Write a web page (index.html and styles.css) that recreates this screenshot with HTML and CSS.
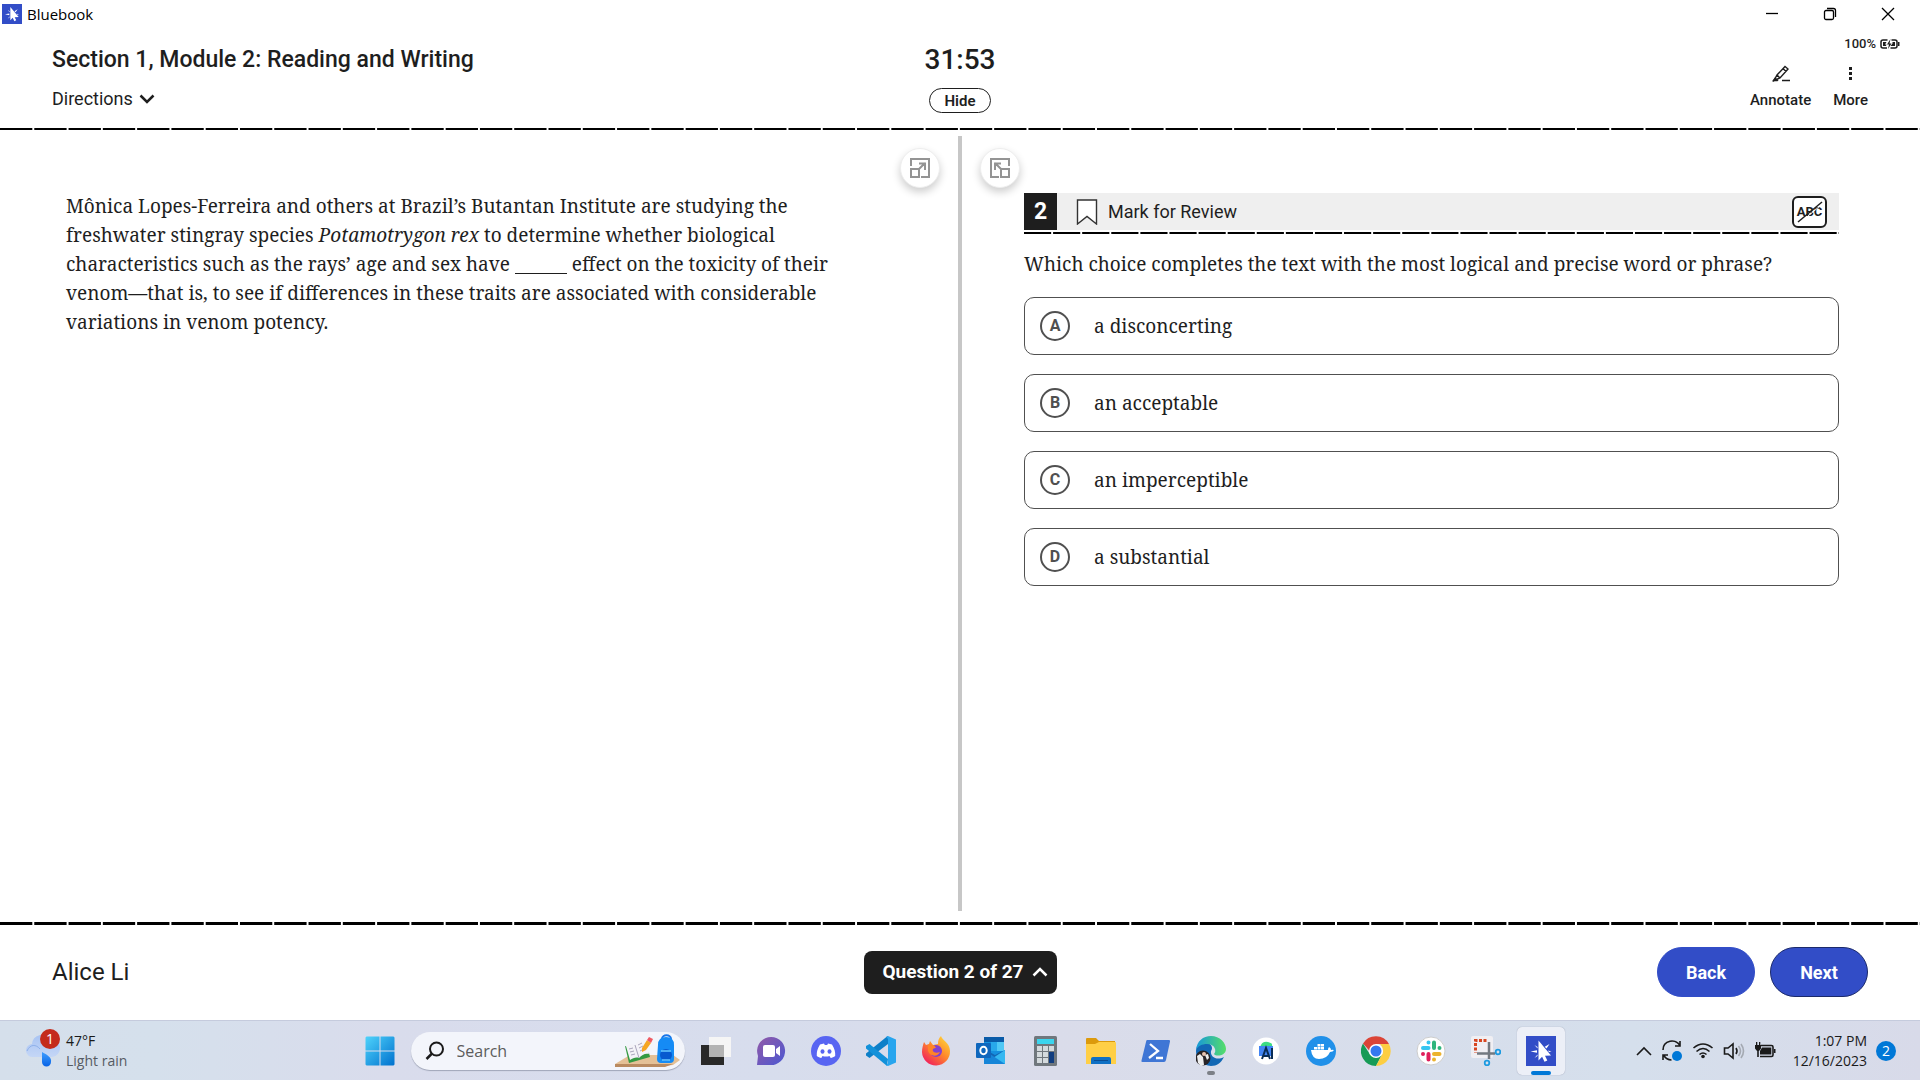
FILE: index.html
```html
<!DOCTYPE html>
<html lang="en">
<head>
<meta charset="utf-8">
<meta name="viewport" content="width=device-width, initial-scale=1">
<title>Bluebook</title>
<link rel="stylesheet" href="styles.css">
</head>
<body>
<svg width="0" height="0" class="symbols" aria-hidden="true">
  <symbol id="bluebook" viewBox="0 0 30 30"><path fill="#324dc7" d="M0 0h30v30H0z"/><path fill="#fff" d="M12.500 4.500L25 19.500l-6 .3 2.300 4.700-2.800 1.200-2.400-5-3.600 3.800z"/><path fill="#fff" d="M4.500 15.500l6.500-1.200v2.400zM8.500 9l3 2v1.500zM8.500 22l3-3.500V20zM23.500 8l-3 4.500-1.800-1.800zM25.500 15.500l-3.500-1 1 1.500z"/></symbol>
</svg>
<div class="window">
  <div class="titlebar">
    <svg class="app-icon"><use href="#bluebook"/></svg>
    <span class="app-name">Bluebook</span>
    <div class="window-controls">
      <button aria-label="Minimize"><svg width="12" height="12" viewBox="0 0 12 12"><path d="M0 5.500h12"/></svg></button>
      <button aria-label="Restore"><svg width="14" height="14" viewBox="0 0 14 14"><rect x="1.500" y="3.500" width="9" height="9" rx="1.500"/><path d="M4 1.500h6.500a2 2 0 0 1 2 2V10"/></svg></button>
      <button aria-label="Close"><svg width="14" height="14" viewBox="0 0 14 14"><path d="M1 1l12 12M13 1L1 13"/></svg></button>
    </div>
  </div>

  <header class="exam-header">
    <div class="section-info">
      <h1>Section 1, Module 2: Reading and Writing</h1>
      <button class="directions">Directions
        <svg width="16" height="10" viewBox="0 0 16 10"><path d="M1.500 1.500L8 8l6.500-6.500"/></svg>
      </button>
    </div>
    <div class="timer">
      <time>31:53</time>
      <button class="hide">Hide</button>
    </div>
    <div class="tools">
      <div class="battery">100%
        <svg width="20" height="10" viewBox="0 0 20 10"><path fill="none" stroke="#1e1e1e" stroke-width="1.500" d="M7.500 1H3Q1 1 1 3v4q0 2 2 2h4M11.500 1H15q2 0 2 2v4q0 2-2 2h-4.500"/><path fill="#1e1e1e" d="M18 3h1.500v4H18zM3 3h3.500L5 5.500h1.500L6 7H3zM12.500 3H15v4h-4.500l2-2.500z"/><path fill="#1e1e1e" d="M10.500 0L7 5.500h2L8 10l3.500-5.500h-2z"/></svg>
      </div>
      <div class="tool-row">
        <button>
          <svg width="20" height="18" viewBox="0 0 20 18"><path d="M3 15.500L6 10l8-8.500 3 2.500-8 9-6 2.500zM6 10l3 3M12 3.500L15 6.500M11 15.500h8" fill="none" stroke="#1e1e1e" stroke-width="1.400"/><path fill="#1e1e1e" d="M1 16.200l3-4 3.500 3-1 1z"/></svg>
          Annotate
        </button>
        <button>
          <svg width="20" height="18" viewBox="0 0 20 18"><path fill="#1e1e1e" d="M8 2h3v3H8zM8 7h3v3H8zM8 12h3v3H8z"/></svg>
          More
        </button>
      </div>
    </div>
  </header>
  <div class="dashes"></div>

  <main class="panes">
    <section class="passage-pane">
      <button class="expand expand-left" aria-label="Expand passage"><svg width="20" height="20" viewBox="0 0 20 20"><path d="M1 8V1h18v18h-8M1 11h8v8H1zM9 11l6-6M9 5.500h6V12"/></svg></button>
      <p>Mônica Lopes-Ferreira and others at Brazil’s Butantan Institute are studying the freshwater stingray species <em>Potamotrygon rex</em> to determine whether biological characteristics such as the rays’ age and sex have <span class="blank"></span> effect on the toxicity of their venom—that is, to see if differences in these traits are associated with considerable variations in venom potency.</p>
    </section>
    <div class="divider"></div>
    <section class="question-pane">
      <button class="expand expand-right" aria-label="Expand question"><svg width="20" height="20" viewBox="0 0 20 20"><path d="M19 8V1H1v18h8M11 11h8v8h-8zM11 11L5 5M11 5.500H5V12"/></svg></button>
      <div class="question-head">
        <span class="number">2</span>
        <button class="mark">
          <svg width="22" height="27" viewBox="0 0 22 27"><path d="M1.500 2h19v24L11 18.500 1.500 26z" fill="#fff" stroke="#333" stroke-width="1.400"/></svg>
          Mark for Review
        </button>
        <button class="eliminate" aria-label="Cross out choices">
          <span>ABC</span>
          <svg width="26" height="22" viewBox="0 0 26 22"><path d="M1 21L25 1" stroke="#1e1e1e" stroke-width="1.500"/><path d="M2 22.500L26 2.500" stroke="#fff"/></svg>
        </button>
      </div>
      <div class="dashes dashes-question"></div>
      <p class="prompt" id="prompt">Which choice completes the text with the most logical and precise word or phrase?</p>
      <div class="choices" role="radiogroup" aria-labelledby="prompt">
        <label class="choice"><span class="mark-circle"><input type="radio" name="answer"><b>A</b></span>a disconcerting</label>
        <label class="choice"><span class="mark-circle"><input type="radio" name="answer"><b>B</b></span>an acceptable</label>
        <label class="choice"><span class="mark-circle"><input type="radio" name="answer"><b>C</b></span>an imperceptible</label>
        <label class="choice"><span class="mark-circle"><input type="radio" name="answer"><b>D</b></span>a substantial</label>
      </div>
    </section>
  </main>

  <div class="dashes dashes-footer"></div>
  <footer class="exam-footer">
    <span class="student">Alice Li</span>
    <button class="navigator">Question 2 of 27
      <svg width="16" height="10" viewBox="0 0 16 10"><path d="M1.500 8.500L8 2l6.500 6.500"/></svg>
    </button>
    <div class="nav-buttons">
      <button class="back">Back</button>
      <button class="next">Next</button>
    </div>
  </footer>
</div>

<nav class="taskbar" aria-label="Taskbar">
  <button class="weather">
    <svg width="36" height="38" viewBox="0 0 36 38"><defs><linearGradient id="cloud" x2="0" y2="1"><stop stop-color="#a9c4f3"/><stop offset="1" stop-color="#c4d6f6"/></linearGradient><linearGradient id="drop" x2="0" y2="1"><stop stop-color="#3f9dff"/><stop offset="1" stop-color="#0763e6"/></linearGradient></defs><path fill="url(#cloud)" d="M7 28a6.500 6.500 0 0 1-1-13 10 10 0 0 1 18-5 9 9 0 0 1 2 18z"/><path d="M1 22c3-7 9-7 13-2" fill="none" stroke="#8db0ea"/><path fill="url(#drop)" d="M16 23c6 3 10 6 9 10a4.500 4.500 0 0 1-9 0z"/><circle cx="24" cy="10" r="10" fill="#c42b1c"/><text x="24" y="15" text-anchor="middle" class="badge-text">1</text></svg>
    <span class="weather-text"><span>47°F</span><span class="muted">Light rain</span></span>
  </button>

  <div class="apps">
    <button class="app" aria-label="Start"><svg width="30" height="30" viewBox="0 0 30 30"><defs><linearGradient id="win" x2="1" y2="1"><stop stop-color="#4fd3fb"/><stop offset="1" stop-color="#0071ce"/></linearGradient></defs><path fill="url(#win)" d="M1.500.5H14.500V14.500H.5V1.500zM15.500.5h13l1 1v13h-14zM.5 15.500h14v14h-13l-1-1zM15.500 15.500h14v13l-1 1h-13z"/></svg></button>
    <label class="search">
      <svg width="20" height="20" viewBox="0 0 20 20"><circle cx="11.500" cy="8" r="6.500"/><path d="M7 12.500L1.500 18" stroke-width="2.500"/></svg>
      <input type="text" placeholder="Search" aria-label="Search">
      <svg class="search-art" width="66" height="36" viewBox="0 0 66 36"><path fill="#e4c096" d="M0 31L15 22h43l7 5-7 5-8 1H0z"/><path fill="#b98a60" d="M0 31h58l-8 3H0z"/><path fill="#349a42" d="M10 13l4 17 21-6-1-4z"/><path fill="#f4f3f8" d="M11 13c4-2 6-2 9-1 2-4 5-5 9-5l5 14c-4-1-7 1-10 4-3-1-6 0-9 2z"/><path d="M20 12l4 13M14 16l4-1M15 19l4-1M16 22l4-1M23 12l4-2M24 15l4-2M25 18l4-2" stroke="#aaa6bc" fill="none"/><path fill="#f6a623" d="M27 15l5-8 4 3-5 7-4 2z"/><path fill="#ef5a62" d="M32 7l2-3 4 2-2 4z"/><path d="M47 6c0-5 9-5 9 0" fill="none" stroke="#1976e8" stroke-width="2"/><path fill="#158bf5" d="M43 12q0-8 8-8t8 8v14q0 4-4 4h-9q-4 0-4-4z"/><rect x="45" y="16" width="12" height="12" rx="6" fill="#0759cf"/><path d="M46 18h10M47 27h8" stroke="#67c7ff" stroke-width="1.500"/></svg>
    </label>
    <button class="app" aria-label="Task view"><svg width="30" height="30" viewBox="0 0 30 30"><path fill="#292929" d="M0 9h23v20H0z"/><path fill="#f5f5f5" d="M8 1h22v20H8z"/><path fill="#b3b3b3" d="M8 9h15v12H8z"/></svg></button>
    <button class="app" aria-label="Chat"><svg width="30" height="30" viewBox="0 0 30 30"><defs><linearGradient id="chat" x2="1" y2="1"><stop stop-color="#9259a7"/><stop offset="1" stop-color="#4b58d2"/></linearGradient></defs><path fill="url(#chat)" d="M1 29l1-9A14 14 0 1 1 14 29z"/><rect x="7" y="9" width="12" height="12" rx="2" fill="#fff"/><path fill="#fff" d="M20 13l4-3v10l-4-3z"/></svg></button>
    <button class="app" aria-label="Discord"><svg width="30" height="30" viewBox="0 0 30 30"><circle cx="15" cy="15" r="15" fill="#5865f2"/><path fill="#fff" d="M9 8.500L13 7.500l.8 1.500h2.400l.8-1.500 4 1c2.500 4 3.500 7.500 3.200 11.500-1.500 1.200-3 1.700-4.500 2L18.500 20q-3.500 1-7 0l-1.200 2c-1.500-.3-3-.8-4.500-2C5.500 16 6.500 12.500 9 8.500z"/><ellipse cx="11.500" cy="15.500" rx="2" ry="2.200" fill="#5865f2"/><ellipse cx="18.500" cy="15.500" rx="2" ry="2.200" fill="#5865f2"/></svg></button>
    <button class="app" aria-label="Visual Studio Code"><svg width="30" height="30" viewBox="0 0 30 30"><path fill="#0d7fc8" d="M22 0v8L3.500 22 0 19.500v-2L21 .5z"/><path fill="#1291da" d="M3.500 8L0 10v2.500L21 30l1-7z"/><path fill="#28a5ee" d="M22 0l8 3.500v23L22 30q-1 0-1.500-1l1.500-2V3L20.500 1z"/></svg></button>
    <button class="app" aria-label="Firefox"><svg width="30" height="30" viewBox="0 0 30 30"><defs><linearGradient id="fox" x1="1" x2=".2" y2="1"><stop stop-color="#ffe43d"/><stop offset=".5" stop-color="#ff8a2a"/><stop offset="1" stop-color="#f0195f"/></linearGradient></defs><path fill="url(#fox)" d="M3 6l2 3 3-1 1-3 3 4 5-1c0-4 1-6 3-8 1 4 9 7 9 15a14 14 0 0 1-28 1C1 12 2 9 3 6z"/><circle cx="15" cy="15" r="6" fill="#8341cf"/><path fill="#ff8427" d="M7 9c4-1 7 0 8 3-2 0-4 1-3 3s4 2 7 1c-2 5-10 5-12-1z"/></svg></button>
    <button class="app" aria-label="Outlook"><svg width="30" height="30" viewBox="0 0 30 30"><path fill="#0a5ba8" d="M8 1h20v8H8z"/><path fill="#1490df" d="M8 6h20v22H8z"/><path fill="#50c8f5" d="M21 6h7v9h-7z"/><path fill="#28a8ea" d="M15 6h6v9h-6z"/><path fill="#1266b4" d="M8 13l11 6 10-5v7H8z"/><path fill="#35b8f1" d="M29 14v14H8z"/><path fill="#1685d8" d="M8 14l21 14H8z"/><rect y="7" width="15" height="15" rx="1" fill="#0f67bd"/><ellipse cx="7.500" cy="14.500" rx="3.200" ry="3.700" fill="none" stroke="#fff" stroke-width="2"/></svg></button>
    <button class="app" aria-label="Calculator"><svg width="30" height="30" viewBox="0 0 30 30"><rect x="3" width="23" height="30" rx="1.500" fill="#70777d"/><path fill="#3bd5ee" d="M6 3h17v5H6z"/><path fill="#d4dadd" d="M6 10h5v5H6zM12 10h5v5h-5zM18 10h5v5h-5zM6 16h5v5H6zM12 16h5v5h-5zM6 22h5v5H6zM12 22h5v5h-5z"/><path fill="#123e80" d="M18 16h5v11h-5z"/></svg></button>
    <button class="app" aria-label="File Explorer"><svg width="30" height="30" viewBox="0 0 30 30"><path fill="#dc9a0c" d="M0 3q0-1 1-1h9l3 3h16v9H0z"/><path fill="#ffcf46" d="M0 8h9l4-2h16q1 0 1 1v21H0z"/><path fill="#0f70c4" d="M5 28v-5q0-2 2-2h16q2 0 2 2v5z"/><path d="M8 24.500h14" stroke="#0a4c92"/></svg></button>
    <button class="app" aria-label="PowerShell"><svg width="30" height="30" viewBox="0 0 30 30"><path fill="#3f76d5" d="M6 4h22q1.500 0 1 1.500L25 24q-.5 2-2 2H1.500Q0 26 .5 24.500L5 6q.3-2 1-2z"/><path d="M9 8l8 7-9 7M15 22h7" fill="none" stroke="#fff" stroke-width="2.300"/></svg></button>
    <button class="app running" aria-label="Edge"><svg width="30" height="30" viewBox="0 0 30 30"><defs><linearGradient id="edge"><stop stop-color="#1698db"/><stop offset="1" stop-color="#55de68"/></linearGradient></defs><path fill="#1268b5" d="M0 15c0-7 7-10 12-8 4 2 5 5 3 8-1 6 6 10 13 6-3 6-7 9-13 9A15 15 0 0 1 0 15z"/><path fill="url(#edge)" d="M0 14C1 5 7 0 15 0c9 0 15 7 15 13 0 7-10 8-12 5 3-3 1-10-7-10-5 0-9 2-11 6z"/><circle cx="7" cy="22" r="7.500" fill="#282426"/><path fill="#eee" d="M1 20l3-2 3 3 1 8-3 1-3-3zM9 19l3-1 1 4-2 2z"/><circle cx="8" cy="18" r="2" fill="#e8c4b0"/></svg></button>
    <button class="app" aria-label="Android Studio"><svg width="30" height="30" viewBox="0 0 30 30"><circle cx="15" cy="15" r="13.500" fill="#fff"/><path fill="#3ddc84" d="M10 9q2-4 7-3t4 4v1H9z"/><path fill="#4285f4" d="M8 10h14v10H8z"/><path d="M11 23l4-11 4 11M12 20h6M21 12v11" fill="none" stroke="#092c55" stroke-width="2"/></svg></button>
    <button class="app" aria-label="Docker"><svg width="30" height="30" viewBox="0 0 30 30"><circle cx="15" cy="15" r="15" fill="#2090e9"/><path fill="#fff" d="M5 14h17q0-2 1-3 2 1 2 3 1-.5 3 0-1 2-4 2-3 7-11 7-7 0-8-9zM8 11h3v2.500H8zM11.500 11h3v2.500h-3zM15 11h3v2.500h-3zM11.500 8h3v2.500h-3zM15 8h3v2.500h-3z"/></svg></button>
    <button class="app" aria-label="Chrome"><svg width="30" height="30" viewBox="0 0 30 30"><path fill="#db4437" d="M2 7.500A15 15 0 0 1 28 8H15v14z"/><path fill="#169b56" d="M2 7.500A15 15 0 0 0 15 30l6-11.500H9z"/><path fill="#fdce42" d="M28 8a15 15 0 0 1-13 22l6-11.500Q24 13 19 8z"/><circle cx="15" cy="15" r="7" fill="#fff"/><circle cx="15" cy="15" r="5.500" fill="#3478ef"/></svg></button>
    <button class="app" aria-label="Slack"><svg width="30" height="30" viewBox="0 0 30 30"><circle cx="15" cy="15" r="14" fill="#fff" stroke="#ccc"/><g fill="none" stroke-width="4" stroke-linecap="round"><path stroke="#36c5f0" d="M7 12h5.500M12.500 6.500h0"/><path stroke="#2eb67d" d="M18 6.500V12M23.500 12h0"/><path stroke="#ecb22e" d="M18 18h5.500M18 23.500h0"/><path stroke="#e01e5a" d="M12.500 18v5.500M7 18h0"/></g></svg></button>
    <button class="app" aria-label="Snipping Tool"><svg width="30" height="30" viewBox="0 0 30 30"><rect width="22" height="22" rx="2" fill="#f0eff3"/><path d="M15.500 4.500h-11v12" fill="none" stroke="#d84621" stroke-width="3" stroke-dasharray="3 1.500"/><path d="M18 6v17M6 17.500h18" stroke="#737980" stroke-width="2.500"/><circle cx="16" cy="27" r="2.300" fill="none" stroke="#1c9ae0" stroke-width="1.800"/><circle cx="27" cy="16" r="2.300" fill="none" stroke="#1c9ae0" stroke-width="1.800"/></svg></button>
    <button class="app active" aria-label="Bluebook"><svg width="30" height="30"><use href="#bluebook"/></svg></button>
  </div>

  <div class="tray">
    <button aria-label="Show hidden icons"><svg width="16" height="24" viewBox="0 0 16 24"><path d="M1 16l7-7 7 7"/></svg></button>
    <button aria-label="Updates"><svg width="22" height="24" viewBox="0 0 22 24"><path d="M2 11C2 1 15-1 19 7M19 2v5h-5M2 21v-5h5M2.500 16q3 5 8 5"/><circle cx="16" cy="17" r="5" fill="#0078d7" stroke="none"/></svg></button>
    <button aria-label="Wi-Fi"><svg width="22" height="24" viewBox="0 0 22 24"><path d="M1.500 9q9.500-8 19 0M4.500 12.500q6.500-6 13 0M7.500 15.500q3.500-3 7 0"/><circle cx="11" cy="17.500" r="1.800" fill="#1a1a1a" stroke="none"/></svg></button>
    <button aria-label="Volume"><svg width="22" height="24" viewBox="0 0 22 24"><path d="M1.500 9H5l5-4v14l-5-4H1.500zM13 9q2 3 0 6"/><path stroke="#a4a9b2" d="M15.500 7q4 5 0 10M18 5q5 7 0 14"/></svg></button>
    <button aria-label="Battery"><svg width="22" height="24" viewBox="0 0 22 24"><path d="M7 6.500h10.500q1.500 0 1.500 1.500v8q0 1.500-1.500 1.500H6M4 12v6"/><path fill="#1a1a1a" stroke="none" d="M8 8.500h9.300v7H6V12zM20 10h1.500v4H20zM1 6h1V3h1.300v3h1.700V3h1.300v3h.7v3.500L5 12H3L1 9.500z"/></svg></button>
    <div class="clock"><span>1:07 PM</span><span>12/16/2023</span></div>
    <button class="notifications" aria-label="Notifications">2</button>
  </div>
</nav>
</body>
</html>
```
FILE: styles.css
```css
* { box-sizing: border-box; }
body {
  margin: 0;
  min-height: 100vh;
  display: flex;
  flex-direction: column;
  background: #fff;
  color: #1e1e1e;
  font-family: Roboto, sans-serif;
}
button {
  margin: 0;
  padding: 0;
  border: 0;
  background: none;
  color: inherit;
  font: inherit;
}
svg { display: block; flex: none; }
.symbols { position: absolute; }
.window { flex: 1; display: flex; flex-direction: column; }

/* Title bar */
.titlebar {
  display: flex;
  align-items: center;
  gap: 5px;
  height: 28px;
  padding: 0 3px 0 2px;
  color: #000;
  font: 15px/20px "Open Sans", sans-serif;
}
.app-icon { width: 20px; height: 20px; }
.window-controls { display: flex; margin-left: auto; }
.window-controls button { width: 58px; height: 28px; display: grid; place-items: center; }
.window-controls svg { fill: none; stroke: #000; stroke-width: 1.3; }

/* Exam header */
.exam-header {
  display: grid;
  grid-template-columns: 1fr auto 1fr;
  height: 100px;
  padding: 0 52px;
}
h1 { margin: 17px 0 0; font-size: 23px; line-height: 30px; font-weight: 500; }
.directions {
  display: flex;
  align-items: center;
  gap: 6px;
  margin-top: 12px;
  font-size: 18px;
  line-height: 24px;
  font-weight: 400;
}
.directions svg, .navigator svg { fill: none; stroke: currentColor; stroke-width: 2.5; }
.timer { display: flex; flex-direction: column; align-items: center; }
.timer time { margin-top: 15px; font-size: 28px; line-height: 34px; font-weight: 500; }
.hide {
  width: 62px;
  height: 25px;
  margin-top: 11px;
  border: 1px solid #1e1e1e;
  border-radius: 13px;
  font-size: 15px;
  line-height: 20px;
  font-weight: 600;
}
.tools { display: flex; flex-direction: column; align-items: flex-end; }
.battery {
  display: flex;
  align-items: center;
  gap: 4px;
  margin: 8px -32px 0 0;
  font-size: 13px;
  line-height: 16px;
  font-weight: 500;
}
.tool-row { display: flex; gap: 22px; margin-top: 13px; }
.tool-row button {
  display: flex;
  flex-direction: column;
  align-items: center;
  gap: 7px;
  font-size: 15px;
  line-height: 20px;
  font-weight: 500;
}
.dashes {
  height: 2px;
  background: linear-gradient(90deg, #000 0 94%, transparent 94%) 0 0 / 34px 100% round;
}
.dashes-footer { height: 3px; }
.dashes-question { margin-top: 2px; background-size: 29px 100%; }

/* Panes */
.panes {
  flex: 1;
  display: grid;
  grid-template-columns: 1fr 4px 1fr;
  padding: 6px 0 11px;
}
.divider { background: #c7c7c7; }
.passage-pane, .question-pane { position: relative; }
.passage-pane { padding: 56px 120px 0 66px; }
.question-pane { padding: 57px 81px 0 62px; }
.passage-pane p, .prompt, .choice {
  font-family: "Noto Serif", "DejaVu Serif Condensed", "DejaVu Serif", serif;
  font-size: 19px;
  line-height: 29px;
}
.passage-pane p { margin: 0; }
.blank { display: inline-block; width: 52px; border-bottom: 1px solid #1e1e1e; vertical-align: -3px; }
.expand {
  position: absolute;
  top: 12px;
  width: 40px;
  height: 40px;
  display: grid;
  place-items: center;
  border: 1px solid #eee;
  border-radius: 50%;
  background: #fff;
  box-shadow: 0 4px 8px #0003;
}
.expand svg { fill: none; stroke: #949494; stroke-width: 2; }
.expand-left { right: 18px; }
.expand-right { left: 18px; }
.question-head {
  display: flex;
  align-items: center;
  height: 37px;
  padding-right: 12px;
  background: #efefef;
}
.number {
  width: 33px;
  background: #1e1e1e;
  color: #fff;
  font-size: 23px;
  line-height: 37px;
  font-weight: 700;
  text-align: center;
}
.mark {
  display: flex;
  align-items: center;
  gap: 10px;
  margin-left: 19px;
  font-size: 18px;
  line-height: 24px;
}
.eliminate {
  display: grid;
  place-items: center;
  width: 35px;
  height: 32px;
  margin-left: auto;
  border: 2px solid #1e1e1e;
  border-radius: 6px;
  background: #fff;
  font-size: 13px;
  line-height: 16px;
  font-weight: 700;
}
.eliminate span, .eliminate svg { grid-area: 1 / 1; }
.prompt { margin: 16px 0 18px; }
.choices { display: flex; flex-direction: column; gap: 19px; }
.choice {
  display: flex;
  align-items: center;
  gap: 24px;
  height: 58px;
  padding-left: 15px;
  border: 1px solid #505050;
  border-radius: 10px;
}
.mark-circle { display: grid; place-items: center; }
.mark-circle input {
  grid-area: 1 / 1;
  appearance: none;
  width: 30px;
  height: 30px;
  margin: 0;
  border: 2px solid #505050;
  border-radius: 50%;
}
.mark-circle b { grid-area: 1 / 1; color: #505050; font: 700 16px/20px Roboto, sans-serif; }

/* Exam footer */
.exam-footer {
  display: grid;
  grid-template-columns: 1fr auto 1fr;
  align-items: center;
  height: 95px;
  padding: 0 52px 1px;
}
.student { font-size: 24px; line-height: 30px; font-weight: 400; }
.navigator {
  display: flex;
  align-items: center;
  gap: 8px;
  height: 43px;
  padding: 0 9px 0 19px;
  border-radius: 8px;
  background: #1e1e1e;
  color: #fff;
  font-size: 19px;
  line-height: 24px;
  font-weight: 700;
}
.nav-buttons { display: flex; justify-content: flex-end; gap: 15px; }
.nav-buttons button {
  width: 98px;
  height: 50px;
  border: 1px solid #324dc7;
  border-radius: 25px;
  background: #324dc7;
  color: #fff;
  font-size: 18px;
  font-weight: 700;
}
.nav-buttons .next { border-color: #1b2a6b; }

/* Taskbar */
.taskbar {
  display: grid;
  grid-template-columns: 1fr auto 1fr;
  align-items: center;
  height: 60px;
  border-top: 1px solid #c5cbdd;
  background: linear-gradient(90deg, #d5dfeb 0, #d5e0ec 8%, #d9dcec 20%, #d7dded 40%, #dadcea 55%, #d5dfec 85%, #d8dae9 100%);
  color: #1a1a1a;
  font: 14px/20px "Open Sans", sans-serif;
}
.weather { display: flex; align-items: center; gap: 4px; padding-left: 26px; text-align: left; }
.weather svg { margin-bottom: 6px; }
.weather-text, .clock { display: flex; flex-direction: column; }
.muted { color: #555b63; }
.badge-text { fill: #fff; font-size: 14px; }
.apps { display: flex; align-items: center; gap: 7px; }
.app { position: relative; width: 48px; height: 48px; display: grid; place-items: center; border-radius: 5px; }
.active { background: #eceff7; box-shadow: 0 0 1px #8b93a8; }
.running::after, .active::after {
  content: "";
  position: absolute;
  bottom: 0;
  left: 20px;
  width: 8px;
  height: 4px;
  border-radius: 2px;
  background: #7c8087;
}
.active::after { left: 14px; width: 20px; background: #0078d7; }
.search {
  display: flex;
  align-items: center;
  width: 274px;
  height: 38px;
  padding: 0 4px 0 14px;
  border-radius: 19px;
  background: #f3f5fb;
  box-shadow: 0 1px 1px #a0a6b8;
}
.search > svg:first-child { fill: none; stroke: #1a1a1a; stroke-width: 2; }
.search input {
  flex: 1;
  min-width: 0;
  margin-left: 12px;
  padding: 0;
  border: 0;
  background: none;
  font: 16px/24px "Open Sans", sans-serif;
}
.search input::placeholder { color: #5c5c5c; opacity: 1; }
.tray { display: flex; align-items: center; justify-content: flex-end; padding-right: 24px; gap: 9px; }
.tray svg { fill: none; stroke: #1a1a1a; stroke-width: 1.6; }
.clock { width: 82px; text-align: right; }
.notifications { width: 20px; height: 20px; border-radius: 50%; background: #0078d7; color: #fff; }
```
